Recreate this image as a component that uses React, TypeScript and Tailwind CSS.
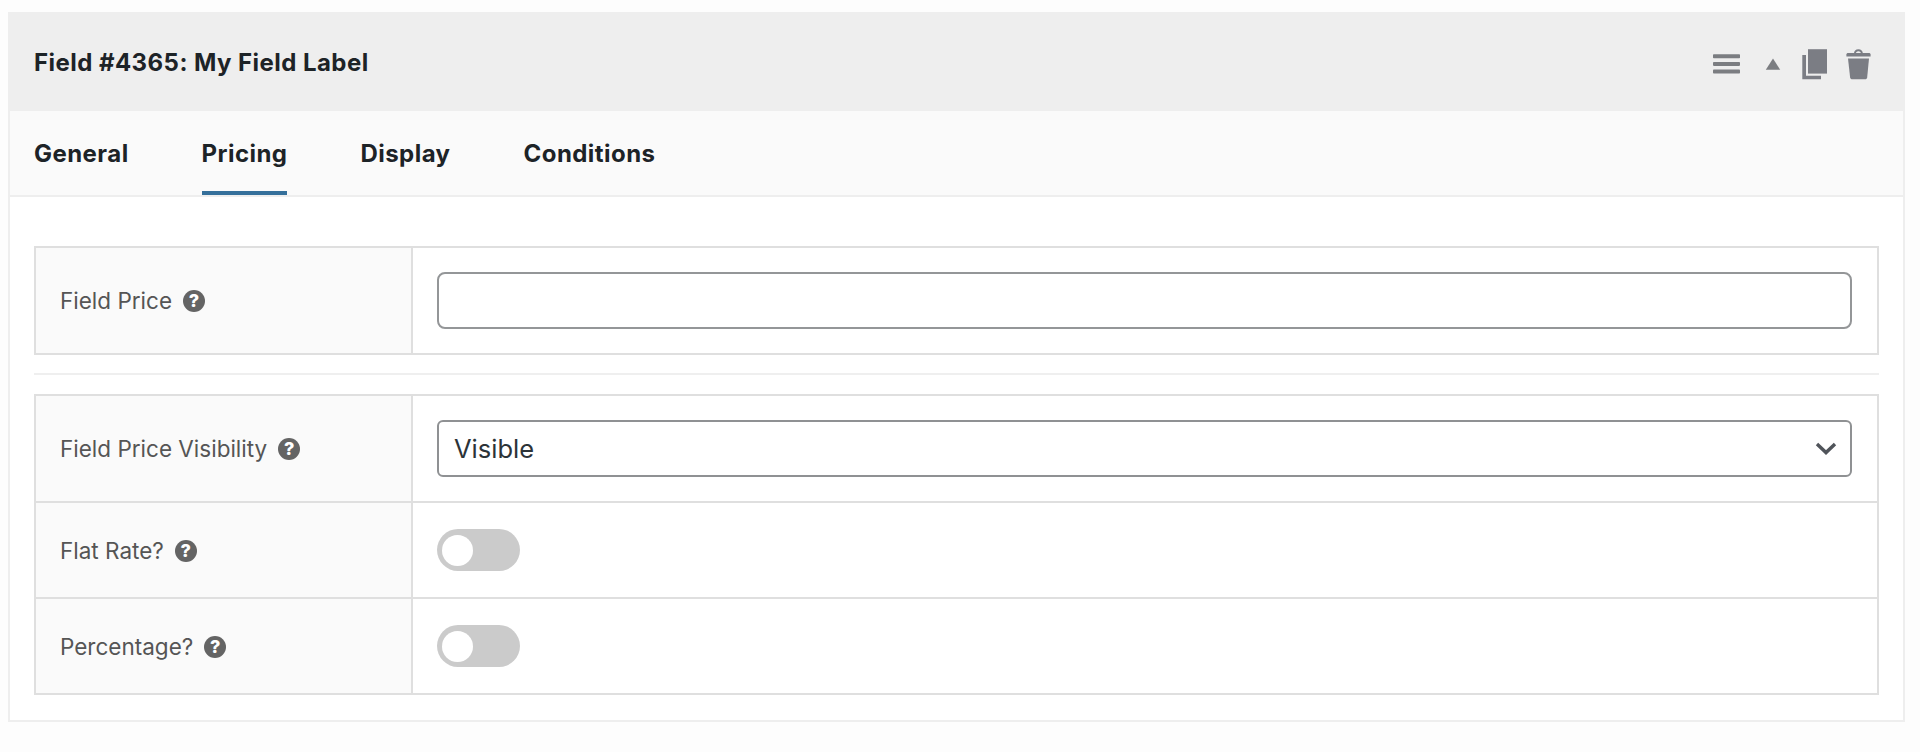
import { useState, type ReactNode } from "react";

const tabs = ["General", "Pricing", "Display", "Conditions"];

function DragIcon() {
  return (
    <svg width="27" height="20" viewBox="0 0 27 20" fill="#7b7d81">
      <rect x="0" y="0.3" width="27" height="4" rx="0.8" />
      <rect x="0" y="7.9" width="27" height="4" rx="0.8" />
      <rect x="0" y="15.5" width="27" height="4" rx="0.8" />
    </svg>
  );
}

function CollapseIcon() {
  return (
    <svg width="16" height="12" viewBox="0 0 16 12" fill="#7b7d81">
      <path d="M8 0.5 15.2 11.7H0.8Z" />
    </svg>
  );
}

function DuplicateIcon() {
  return (
    <svg width="26" height="31" viewBox="0 0 26 31" fill="#7b7d84">
      <path d="M6 0.2H25V24.6H6Z" />
      <path d="M0.3 5.9H4V26.8H19V30.2H0.3Z" />
    </svg>
  );
}

function TrashIcon() {
  return (
    <svg width="25" height="31" viewBox="0 0 25 31" fill="#7b7d84">
      <path
        d="M8.8 5C9 2.4 10.3 1.3 12.4 1.3S15.8 2.4 16 5"
        fill="none"
        stroke="#7b7d84"
        strokeWidth="1.9"
      />
      <path d="M2.3 4H22.7C24 4 24.6 4.6 24.6 5.6V7.5H0.4V5.6C0.4 4.6 1 4 2.3 4Z" />
      <path d="M2 9.5H23L21.2 28.2C21 29.7 20.3 30.2 19 30.2H6.4C5 30.2 4.3 29.7 4.1 28.2Z" />
    </svg>
  );
}

function HelpTip() {
  return (
    <span className="grid size-[22px] shrink-0 place-items-center rounded-full bg-[#646464] text-[18px] leading-none font-extrabold text-white">
      ?
    </span>
  );
}

function Row({
  label,
  className,
  children,
}: {
  label: string;
  className: string;
  children: ReactNode;
}) {
  return (
    <div className={`flex ${className}`}>
      <div className="flex w-[377px] shrink-0 items-center gap-[11px] border-r-2 border-[#dfdfdf] bg-[#fafafa] pt-px pl-6 text-[22.5px] text-[#555]">
        <span>{label}</span>
        <HelpTip />
      </div>
      <div className="flex flex-1 items-center bg-white pr-[25px] pl-6">{children}</div>
    </div>
  );
}

function Toggle() {
  const [on, setOn] = useState(false);
  return (
    <button
      type="button"
      role="switch"
      aria-checked={on}
      onClick={() => setOn(!on)}
      className={`flex h-[42px] w-[83px] items-center rounded-full px-[5px] ${
        on ? "justify-end bg-[#2271b1]" : "bg-[#cbcbcb]"
      }`}
    >
      <span className="size-[31px] rounded-full bg-white" />
    </button>
  );
}

export default function App() {
  const [active, setActive] = useState("Pricing");

  return (
    <div className="h-[752px] w-full overflow-hidden bg-[#fdfdfd] pt-3 pr-[15px] pl-2 font-['Inter',sans-serif]">
      <div className="h-[710px] border-2 border-t-0 border-[#eee] bg-white">
        <header className="flex h-[99px] items-center justify-between bg-[#eee] pr-8 pl-6">
          <h3 className="pt-[3px] text-[24px] font-bold tracking-[0.45px] text-[#1d2327]">
            Field #4365: My Field Label
          </h3>
          <div className="flex items-center pt-[5px]">
            <DragIcon />
            <span className="ml-[25px]">
              <CollapseIcon />
            </span>
            <span className="ml-[21px]">
              <DuplicateIcon />
            </span>
            <span className="ml-[18px]">
              <TrashIcon />
            </span>
          </div>
        </header>

        <nav className="flex h-[86px] gap-[73px] border-b-2 border-[#eee] bg-[#fafafa] pl-6">
          {tabs.map((tab) => (
            <button
              key={tab}
              type="button"
              onClick={() => setActive(tab)}
              className={`border-b-4 pt-[5px] text-[24px] font-bold tracking-[0.45px] text-[#1d2327] ${
                tab === active ? "border-[#35709b]" : "border-transparent"
              }`}
            >
              {tab}
            </button>
          ))}
        </nav>

        <div className="px-6 pt-[49px]">
          <div className="border-2 border-[#dfdfdf]">
            <Row label="Field Price" className="h-[105px]">
              <input
                type="text"
                className="h-[57px] w-full rounded-[8px] border-2 border-[#949698] bg-white px-4 text-2xl outline-none"
              />
            </Row>
          </div>

          <div className="mt-[18px] mb-[19px] h-[2px] bg-[#efefef]" />

          <div className="divide-y-2 divide-[#dfdfdf] border-2 border-[#dfdfdf]">
            <Row label="Field Price Visibility" className="h-[107px]">
              <div className="flex h-[57px] w-full items-center justify-between rounded-[6px] border-2 border-[#8f9193] bg-white pt-px pr-[13px] pl-[15px] text-[25.5px] text-[#2c3338]">
                <span>Visible</span>
                <svg width="22" height="14" viewBox="0 0 22 14" fill="none" stroke="#50545a" strokeWidth="3.4">
                  <path d="M2 2 11 10.6 20 2" />
                </svg>
              </div>
            </Row>
            <Row label="Flat Rate?" className="h-[96px]">
              <Toggle />
            </Row>
            <Row label="Percentage?" className="h-[94px]">
              <Toggle />
            </Row>
          </div>
        </div>
      </div>
    </div>
  );
}
